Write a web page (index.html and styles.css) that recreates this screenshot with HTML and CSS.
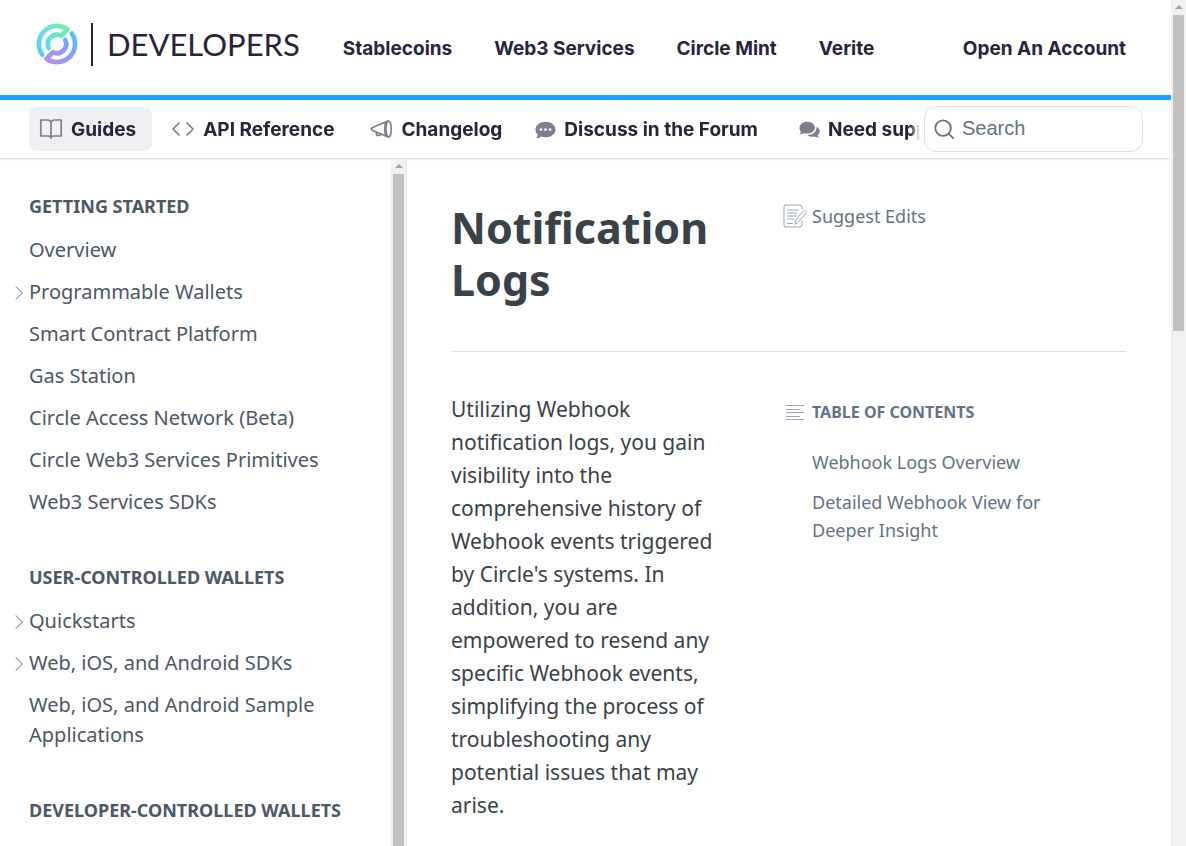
FILE: index.html
```html
<!DOCTYPE html>
<html lang="en">
<head>
<meta charset="utf-8">
<meta name="viewport" content="width=device-width, initial-scale=1">
<title>Notification Logs</title>
<link rel="stylesheet" href="styles.css">
</head>
<body>
<div class="app">
  <div class="page">
    <header class="topbar">
      <a class="brand" href="#" aria-label="Circle Developers">
        <svg class="brand-mark" viewBox="0 0 42 42" aria-hidden="true">
          <defs>
            <linearGradient id="cool" gradientUnits="userSpaceOnUse" x1="4" y1="32" x2="32" y2="6"><stop offset="0" stop-color="#5bc6fb"/><stop offset=".5" stop-color="#68dfdb"/><stop offset="1" stop-color="#76efa8"/></linearGradient>
            <linearGradient id="warm" gradientUnits="userSpaceOnUse" x1="10" y1="36" x2="38" y2="10"><stop offset="0" stop-color="#b090f5"/><stop offset=".5" stop-color="#8b9dfb"/><stop offset="1" stop-color="#55c0fb"/></linearGradient>
          </defs>
          <g fill="none" stroke-width="4.700" stroke-linecap="round" stroke-linejoin="round">
            <path stroke="url(#cool)" d="M6.250 31.550A18.150 18.150 0 0 1 31.550 6.250L25.050 12.750A9.200 9.200 0 0 0 12.750 25.050"/>
            <path stroke="url(#warm)" d="M35.750 10.450A18.150 18.150 0 0 1 10.450 35.750L16.950 29.250A9.200 9.200 0 0 0 29.250 16.950"/>
          </g>
        </svg>
        <span class="brand-rule"></span>
        <span class="brand-name">DEVELOPERS</span>
      </a>
      <nav class="links" aria-label="Products">
        <a href="#">Stablecoins</a>
        <a href="#">Web3 Services</a>
        <a href="#">Circle Mint</a>
        <a href="#">Verite</a>
      </nav>
      <a class="account" href="#">Open An Account</a>
    </header>

    <div class="subbar">
      <nav class="tabs" aria-label="Documentation">
        <a class="tab tab-active" href="#">
          <svg class="icon line" viewBox="0 0 24 24" aria-hidden="true"><path d="M12 5v16M12 5.500Q11.500 3 8.500 3H1.800v16H9q3 0 3 2 0-2 3-2h7.200V3h-6.700Q12.500 3 12 5.500Z"/></svg>
          <span>Guides</span></a>
        <a class="tab" href="#">
          <svg class="icon line" viewBox="0 0 24 24" aria-hidden="true"><path d="M8 6 2 12l6 6M16 6l6 6-6 6"/></svg>
          <span>API Reference</span></a>
        <a class="tab" href="#">
          <svg class="icon line" viewBox="0 0 24 24" aria-hidden="true"><path d="M19 4 3 10.800q-1.500 1.200 0 2.400L19 20M16.800 5q-2 7 0 14M7.500 15.500q-.5 3 1.500 3t2.800-1.300"/><ellipse cx="19.600" cy="12" rx="2.600" ry="8"/></svg>
          <span>Changelog</span></a>
        <a class="tab tab-forum" href="#">
          <svg class="icon solid" viewBox="1 0 23 23" aria-hidden="true"><path fill-rule="evenodd" d="M12.500 3C6.500 3 1.500 6.700 1.500 11.500c0 2.300 1 4.200 2.600 5.600-.2 1.700-1 3-1.800 4 2.500.1 4.300-.8 5.500-1.800 1.500.5 3 .7 4.700.7 6 0 11-3.700 11-8.500S18.500 3 12.500 3ZM7.500 10a1.600 1.600 0 1 1 0 3.200 1.600 1.600 0 0 1 0-3.200Zm5 0a1.600 1.600 0 1 1 0 3.200 1.600 1.600 0 0 1 0-3.200Zm5 0a1.600 1.600 0 1 1 0 3.200 1.600 1.600 0 0 1 0-3.200Z"/></svg>
          <span>Discuss in the Forum</span></a>
        <a class="tab tab-support" href="#">
          <svg class="icon solid" viewBox="1 0 23 23" aria-hidden="true"><path d="M10 3C5.300 3 1.500 6 1.500 9.800c0 1.500.7 3 1.700 4.100-.3 1.100-.9 2-1.600 2.700 2 .1 3.500-.5 4.700-1.200 1.100.4 2.400.6 3.700.6 4.700 0 8.500-2.900 8.500-6.400S14.700 3 10 3Z"/><path d="M20.300 8.600c.5 4.700-4.400 9-10 8.900 1.500 1.500 4.500 2.500 8 1.600 1.200.8 2.700 1.400 4.600 1.300-.8-.7-1.300-1.500-1.600-2.500C24.900 15 24.200 10.500 20.300 8.600Z"/></svg>
          <span>Need support?</span></a>
      </nav>
      <label class="search">
        <svg class="search-icon" viewBox="0 0 24 24" aria-hidden="true"><circle cx="11" cy="11" r="8.500"/><path d="m17 17 5 5"/></svg>
        <input type="search" placeholder="Search" aria-label="Search">
      </label>
    </div>

    <div class="body">
      <aside class="sidebar">
        <section class="group">
          <h2>GETTING STARTED</h2>
          <ul>
            <li><a href="#">Overview</a></li>
            <li><a class="has-children" href="#">Programmable Wallets</a></li>
            <li><a href="#">Smart Contract Platform</a></li>
            <li><a href="#">Gas Station</a></li>
            <li><a href="#">Circle Access Network (Beta)</a></li>
            <li><a href="#">Circle Web3 Services Primitives</a></li>
            <li><a href="#">Web3 Services SDKs</a></li>
          </ul>
        </section>
        <section class="group">
          <h2>USER-CONTROLLED WALLETS</h2>
          <ul>
            <li><a class="has-children" href="#">Quickstarts</a></li>
            <li><a class="has-children" href="#">Web, iOS, and Android SDKs</a></li>
            <li><a href="#">Web, iOS, and Android Sample Applications</a></li>
          </ul>
        </section>
        <section class="group">
          <h2>DEVELOPER-CONTROLLED WALLETS</h2>
          <ul>
            <li><a class="has-children" href="#">Quickstarts</a></li>
          </ul>
        </section>
      </aside>
      <div class="scrollbar" aria-hidden="true"><i class="arrow"></i><i class="thumb thumb-full"></i></div>

      <main class="article">
        <div class="article-head">
          <h1>Notification Logs</h1>
          <a class="suggest" href="#">
            <svg class="suggest-icon" viewBox="0 0 24 24" aria-hidden="true"><path d="M19 5V3q0-2-2-2H3Q1 1 1 3v18q0 2 2 2h14q2 0 2-2v-4M4.500 6h11M4.500 9h9M4.500 12h9M4.500 15h6M4.500 19.500h5M12 20l1.200-4.800L20.500 7q1-1 2.200 0t.1 2.300L15.500 18Z"/></svg>
            Suggest Edits</a>
        </div>
        <div class="article-body">
          <p>Utilizing Webhook notification logs, you gain visibility into the comprehensive history of Webhook events triggered by Circle's systems. In addition, you are empowered to resend any specific Webhook events, simplifying the process of troubleshooting any potential issues that may arise.</p>
          <nav class="toc" aria-labelledby="toc-title">
            <h2 id="toc-title">
              <svg class="toc-icon" viewBox="0 0 20 18" aria-hidden="true"><path d="M1 2.500h18M1 6.500h14M1 9.500h18M1 13.500h14M1 16.500h18"/></svg>
              TABLE OF CONTENTS</h2>
            <a href="#">Webhook Logs Overview</a>
            <a href="#">Detailed Webhook View for Deeper Insight</a>
          </nav>
        </div>
      </main>
    </div>
  </div>
  <div class="scrollbar" aria-hidden="true"><i class="arrow"></i><i class="thumb"></i></div>
</div>
</body>
</html>
```
FILE: styles.css
```css
* { box-sizing: border-box; }
body { margin: 0; color: #384248; background: #fff; font-family: "Noto Sans", "Open Sans", sans-serif; }
a { color: inherit; text-decoration: none; }
h1, h2, p, ul { margin: 0; padding: 0; }
ul { list-style: none; }

.app { display: flex; height: 100vh; overflow: hidden; }
.page { flex: 1; min-width: 0; display: flex; flex-direction: column; }

.topbar {
  flex: none; display: flex; align-items: center; height: 100px; padding: 2px 45px 0 36px;
  border-bottom: 5px solid #1aa1ff; color: #29233b;
  font: 700 19px/28px Inter, sans-serif;
}
.brand { display: flex; align-items: center; margin: 0 43px 9px 0; }
.brand-mark { width: 42px; height: 42px; }
.brand-rule { width: 2px; height: 43px; margin: 0 14px 0 13px; background: #29233b; }
.brand-name { font: 400 31px/40px Lato, sans-serif; }
.links { display: flex; gap: 42px; margin-right: auto; white-space: nowrap; }
.account { white-space: nowrap; }

.subbar {
  flex: none; display: flex; align-items: center; height: 59px; padding: 0 28px 0 29px;
  border-bottom: 1px solid #e3e3e5; box-shadow: 0 1px 1px #f3f3f4; position: relative;
  color: #29233b; font: 700 19px/28px Inter, sans-serif;
}
.tabs {
  flex: 1; min-width: 0; display: flex; overflow: hidden; white-space: nowrap;
  margin-right: 4px;
  -webkit-mask-image: linear-gradient(to left, transparent, #000 10px);
  mask-image: linear-gradient(to left, transparent, #000 10px);
}
.tab { flex: none; display: flex; align-items: center; gap: 8px; height: 44px; padding: 0 16px 0 10px; margin-right: 9px; border-radius: 8px; }
.tab span { padding-top: 1px; }
.tab-active { background: #f0eff4; }
.tab-forum { padding-left: 8px; }
.tab-support { padding-left: 16px; }
.icon { width: 24px; height: 24px; }
.line { fill: none; stroke: #817c8e; stroke-width: 1.700; stroke-linejoin: round; stroke-linecap: round; }
.solid { width: 21px; height: 21px; fill: #817c8e; }
.search {
  flex: none; display: flex; align-items: center; width: 219px; height: 46px; padding: 0 8px; margin-bottom: 1px;
  border: 1px solid #dfdfe2; border-radius: 12px; color: #637288;
}
.search-icon { flex: none; width: 22px; height: 22px; fill: none; stroke: #637288; stroke-width: 2; stroke-linecap: round; }
.search input { width: 100%; min-width: 0; padding: 0 0 2px 7px; border: 0; outline: 0; background: none; color: inherit; font: 20px/28px "Liberation Sans", sans-serif; }
.search input::placeholder { color: #637288; opacity: 1; }

.body { flex: 1; min-height: 0; display: flex; overflow: hidden; }
.sidebar { flex: none; width: 391px; padding: 32px 60px 0 29px; overflow: hidden; color: #4c5767; }
.group { margin-bottom: 39px; }
.group h2 { margin-bottom: 8px; font: 700 18px/30px "Noto Sans", sans-serif; white-space: nowrap; }
.group a { position: relative; display: block; padding: 6px 0; font-size: 20px; line-height: 30px; }
.has-children::before {
  content: ""; position: absolute; left: -18px; top: 17px; width: 9px; height: 9px;
  border: solid #949ba6; border-width: 1px 1px 0 0; transform: rotate(45deg);
}

.scrollbar { flex: none; display: flex; flex-direction: column; align-items: center; width: 15px; background: #f1f1f1; }
.arrow { flex: none; width: 0; height: 9px; border: solid transparent; border-width: 0 4px 4px; border-bottom-color: #a0a0a0; margin-bottom: 6px; }
.thumb { flex: none; width: 11px; height: 316px; background: #c1c1c1; }
.thumb-full { flex: 1; height: auto; }

.article { flex: 1; min-width: 0; padding: 43px 45px 0 44px; border-left: 1px solid #e3e3e5; }
.article-head, .article-body { display: grid; grid-template-columns: minmax(0, 268px) minmax(0, 1fr); column-gap: 64px; align-items: start; }
.article-head { padding-bottom: 45px; border-bottom: 1px solid #e3e3e5; }
h1 { font-size: 43px; line-height: 52px; font-weight: 700; }
.suggest { display: flex; align-items: center; gap: 5px; font-size: 18px; line-height: 28px; color: #637288; }
.suggest-icon { width: 24px; height: 24px; fill: none; stroke: #9ba6ba; stroke-width: 1; stroke-linejoin: round; stroke-linecap: round; }
.article-body { padding-top: 41px; }
.article-body p { font-size: 21px; line-height: 33px; }
.toc { display: flex; flex-direction: column; gap: 12px; padding: 5px 50px 0 29px; color: #637288; font-size: 18px; line-height: 28px; }
.toc h2 { display: flex; align-items: center; gap: 7px; margin: 0 0 10px -27px; font: 700 16px/28px "Noto Sans", sans-serif; white-space: nowrap; }
.toc-icon { width: 20px; height: 18px; fill: none; stroke: #9ba6ba; stroke-width: 1; }
```
